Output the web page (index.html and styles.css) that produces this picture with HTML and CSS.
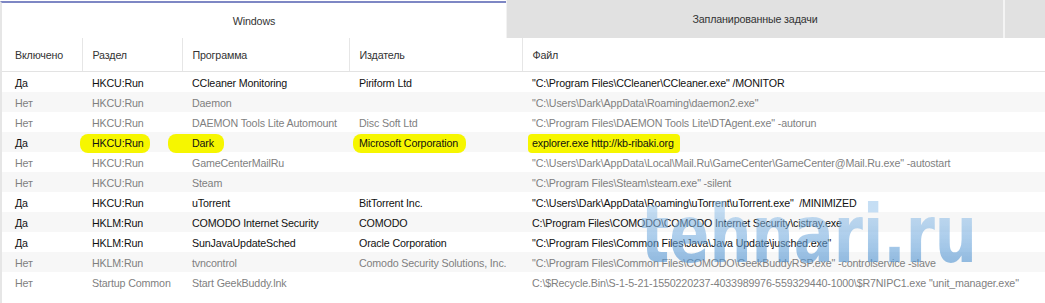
FILE: index.html
```html
<!DOCTYPE html>
<html lang="ru">
<head>
    <meta charset="UTF-8">
    <title>Автозагрузка</title>
    <link rel="stylesheet" href="styles.css">
</head>
<body>

<div class="tabs">
    <div class="tab active">Windows</div>
    <div class="tab">Запланированные задачи</div>
    <div class="tab tab-rest"></div>
</div>

<div class="grid">
    <table>
        <colgroup>
            <col class="c1"><col class="c2"><col class="c3"><col class="c4"><col>
        </colgroup>
        <thead>
            <tr>
                <th>Включено</th>
                <th>Раздел</th>
                <th>Программа</th>
                <th>Издатель</th>
                <th>Файл</th>
            </tr>
        </thead>
        <tbody>
            <tr class="on"><td>Да</td><td>HKCU:Run</td><td>CCleaner Monitoring</td><td>Piriform Ltd</td><td>"C:\Program Files\CCleaner\CCleaner.exe" /MONITOR</td></tr>
            <tr class="off"><td>Нет</td><td>HKCU:Run</td><td>Daemon</td><td></td><td>"C:\Users\Dark\AppData\Roaming\daemon2.exe"</td></tr>
            <tr class="off"><td>Нет</td><td>HKCU:Run</td><td>DAEMON Tools Lite Automount</td><td>Disc Soft Ltd</td><td>"C:\Program Files\DAEMON Tools Lite\DTAgent.exe" -autorun</td></tr>
            <tr class="on"><td>Да</td><td><span class="mark m-key">HKCU:Run</span></td><td><span class="mark m-name">Dark</span></td><td><span class="mark m-pub">Microsoft Corporation</span></td><td><span class="mark m-file">explorer.exe http://kb-ribaki.org</span></td></tr>
            <tr class="off"><td>Нет</td><td>HKCU:Run</td><td>GameCenterMailRu</td><td></td><td>"C:\Users\Dark\AppData\Local\Mail.Ru\GameCenter\GameCenter@Mail.Ru.exe" -autostart</td></tr>
            <tr class="off"><td>Нет</td><td>HKCU:Run</td><td>Steam</td><td></td><td>"C:\Program Files\Steam\steam.exe" -silent</td></tr>
            <tr class="on"><td>Да</td><td>HKCU:Run</td><td>uTorrent</td><td>BitTorrent Inc.</td><td>"C:\Users\Dark\AppData\Roaming\uTorrent\uTorrent.exe"&nbsp; /MINIMIZED</td></tr>
            <tr class="on"><td>Да</td><td>HKLM:Run</td><td>COMODO Internet Security</td><td>COMODO</td><td>C:\Program Files\COMODO\COMODO Internet Security\cistray.exe</td></tr>
            <tr class="on"><td>Да</td><td>HKLM:Run</td><td>SunJavaUpdateSched</td><td>Oracle Corporation</td><td>"C:\Program Files\Common Files\Java\Java Update\jusched.exe"</td></tr>
            <tr class="off"><td>Нет</td><td>HKLM:Run</td><td>tvncontrol</td><td>Comodo Security Solutions, Inc.</td><td>"C:\Program Files\Common Files\COMODO\GeekBuddyRSP.exe" -controlservice -slave</td></tr>
            <tr class="off"><td>Нет</td><td>Startup Common</td><td>Start GeekBuddy.lnk</td><td></td><td>C:\$Recycle.Bin\S-1-5-21-1550220237-4033989976-559329440-1000\$R7NIPC1.exe "unit_manager.exe"</td></tr>
        </tbody>
    </table>
</div>

<div class="watermark">tehnari.ru</div>

</body>
</html>
```

FILE: styles.css
```css
body {
    margin: 0;
    font-family: "Liberation Sans", Arial, sans-serif;
    font-size: 10.7px;
    letter-spacing: -0.15px;
    background: white;
    width: 1045px;
    height: 303px;
    overflow: hidden;
    position: relative;
}
.tabs {
    display: flex;
    height: 38px;
}
.tab {
    flex: 0 0 496px;
    background: #e1e1e1;
    color: #333;
    display: flex;
    align-items: center;
    justify-content: center;
    border-left: 1px solid #f2f2f2;
}
.tab.active {
    flex: 0 0 504px;
    background: white;
    border-top: 2px solid #7e87c4;
    border-left: 2px solid #e6e6e6;
    margin-top: 1px;
}
.tab-rest {
    flex: 1 1 auto;
    border-left: 2px solid #f4f4f4;
}
.grid {
    border-left: 2px solid #e6e6e6;
    height: 265px;
}
table {
    border-collapse: collapse;
    table-layout: fixed;
    width: 1043px;
}
col.c1 { width: 80px; }
col.c2 { width: 100px; }
col.c3 { width: 167px; }
col.c4 { width: 173px; }
th {
    height: 33px;
    text-align: left;
    font-weight: normal;
    color: #333;
    padding: 0 10px;
    border-left: 1px solid #e6e6e6;
    border-bottom: 1px solid #e3e3e3;
    white-space: nowrap;
}
th:first-child {
    border-left: none;
    padding-left: 13px;
}
td {
    height: 18px;
    line-height: 18px;
    padding: 2px 10px 0;
    white-space: nowrap;
    overflow: visible;
}
td:first-child {
    padding-left: 13px;
}
tbody tr:nth-child(even) {
    background: #f7f7f7;
}
tr.on td { color: #111; }
tr.off td { color: #7f7f7f; }
.mark {
    background: #f6f600;
    border-radius: 8px;
    padding: 3px 6px 4px;
    margin: 0 -6px;
}
.m-key { padding-left: 12px; margin-left: -12px; }
.m-name { padding-left: 24px; margin-left: -24px; padding-right: 10px; }
.m-pub { padding-right: 8px; }
.m-file { padding-left: 4px; margin-left: -4px; border-radius: 4px; }
.watermark {
    position: absolute;
    left: 641px;
    top: 195px;
    font-family: "DejaVu Sans", sans-serif;
    font-weight: bold;
    font-size: 80px;
    line-height: 1;
    letter-spacing: 0;
    transform: scaleX(0.74);
    transform-origin: left top;
    background: linear-gradient(to bottom, rgba(150, 195, 235, 0.55) 20%, rgba(70, 140, 205, 0.6) 90%);
    -webkit-background-clip: text;
    background-clip: text;
    color: transparent;
    pointer-events: none;
}
```
